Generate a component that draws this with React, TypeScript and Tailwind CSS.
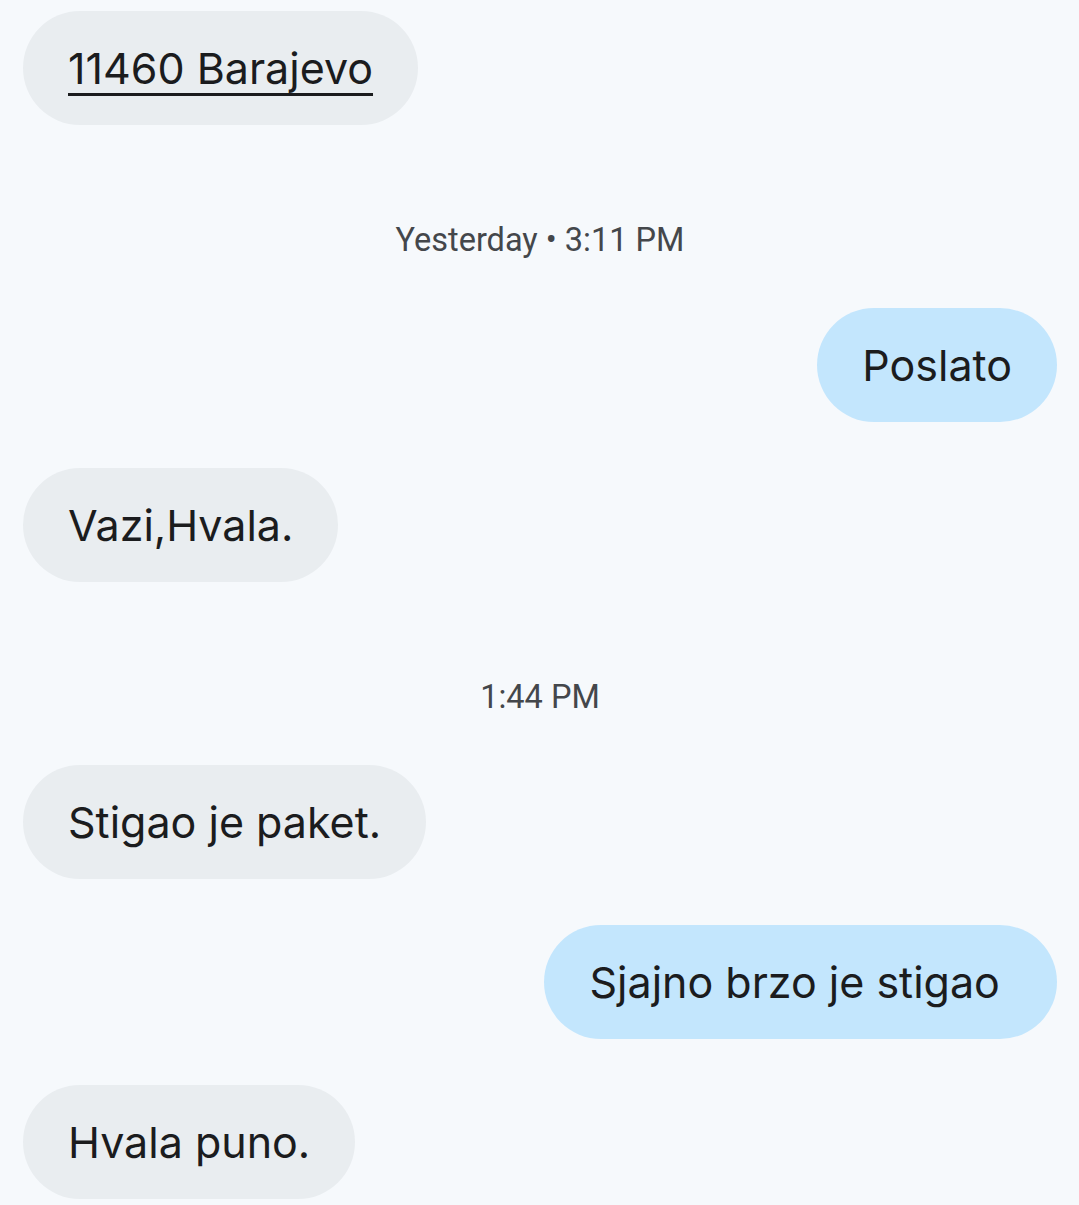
import React from 'react';

type Msg =
  | { kind: 'in' | 'out'; text: string; link?: boolean }
  | { kind: 'time'; text: string };

const messages: Msg[] = [
  { kind: 'in', text: '11460 Barajevo', link: true },
  { kind: 'time', text: 'Yesterday • 3:11 PM' },
  { kind: 'out', text: 'Poslato' },
  { kind: 'in', text: 'Vazi,Hvala.' },
  { kind: 'time', text: '1:44 PM' },
  { kind: 'in', text: 'Stigao je paket.' },
  { kind: 'out', text: 'Sjajno brzo je stigao\u00a0' },
  { kind: 'in', text: 'Hvala puno.' },
];

function Bubble({ msg }: { msg: Extract<Msg, { kind: 'in' | 'out' }> }) {
  const isOut = msg.kind === 'out';
  return (
    <div className={isOut ? 'flex justify-end' : 'flex justify-start'}>
      <div
        className={
          'h-[114px] flex items-center px-[45px] rounded-[57px] text-[43px] text-[#1b1c1e] ' +
          (isOut ? 'bg-[#c3e6fd]' : 'bg-[#e9edf0]')
        }
      >
        {msg.link ? (
          <span className="underline decoration-[3px] underline-offset-[9px]">{msg.text}</span>
        ) : (
          <span>{msg.text}</span>
        )}
      </div>
    </div>
  );
}

export default function App() {
  return (
    <div
      className="min-h-screen bg-[#f6f9fc] pl-[23px] pr-[22px] pt-[11px] flex flex-col"
      style={{ fontFamily: 'Inter, Roboto, sans-serif' }}
    >
      {messages.map((m, i) => {
        if (m.kind === 'time') {
          return (
            <div
              key={i}
              className="h-[40px] mt-[95px] mb-[48px] flex items-center justify-center text-[32.5px] text-[#44474b]"
              style={{ fontFamily: 'Roboto, sans-serif' }}
            >
              {m.text}
            </div>
          );
        }
        const prev = messages[i - 1];
        const gap = i === 0 || prev.kind === 'time' ? '' : 'mt-[46px]';
        return (
          <div key={i} className={gap}>
            <Bubble msg={m} />
          </div>
        );
      })}
    </div>
  );
}
